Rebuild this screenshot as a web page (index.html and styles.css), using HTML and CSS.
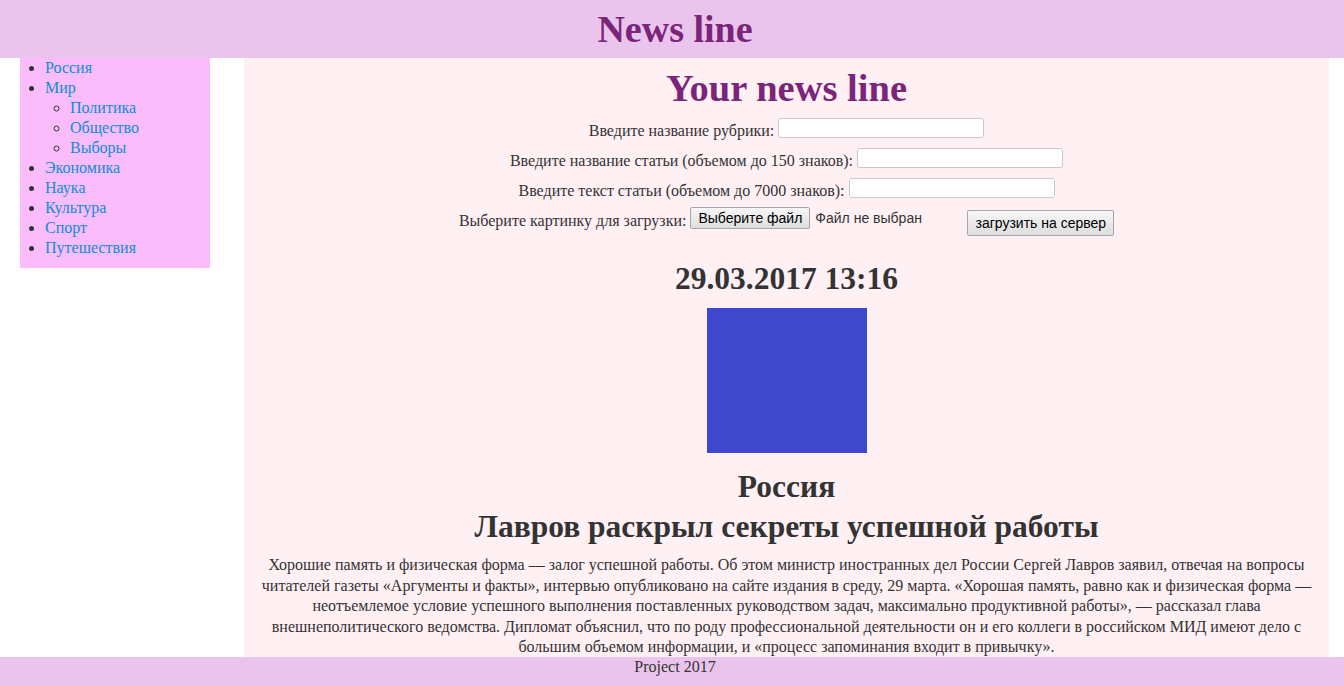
FILE: index.html
```html
<!DOCTYPE html>
<html lang="ru">
<head>
<meta charset="utf-8">
<title>News line</title>
<link rel="stylesheet" href="styles.css">
</head>
<body>
<header class="site-header">
  <h1 class="site-title">News line</h1>
</header>
<div class="layout">
  <nav class="sidebar">
    <ul class="menu">
      <li><a href="#">Россия</a></li>
      <li><a href="#">Мир</a>
        <ul class="submenu">
          <li><a href="#">Политика</a></li>
          <li><a href="#">Общество</a></li>
          <li><a href="#">Выборы</a></li>
        </ul>
      </li>
      <li><a href="#">Экономика</a></li>
      <li><a href="#">Наука</a></li>
      <li><a href="#">Культура</a></li>
      <li><a href="#">Спорт</a></li>
      <li><a href="#">Путешествия</a></li>
    </ul>
  </nav>
  <main class="content">
    <h2 class="page-title">Your news line</h2>
    <form class="news-form">
      <div class="form-row"><span class="label">Введите название рубрики:</span><input class="text-input" type="text"></div>
      <div class="form-row"><span class="label">Введите название статьи (объемом до 150 знаков):</span><input class="text-input" type="text"></div>
      <div class="form-row"><span class="label">Введите текст статьи (объемом до 7000 знаков):</span><input class="text-input" type="text"></div>
      <div class="form-row file-row">
        <span class="label">Выберите картинку для загрузки:</span>
        <span class="file-box"><span class="btn file-btn">Выберите файл</span><span class="file-name">Файл не выбран</span></span>
        <span class="btn submit-btn">загрузить на сервер</span>
      </div>
    </form>
    <article class="news">
      <h2 class="news-date">29.03.2017 13:16</h2>
      <div class="news-image"></div>
      <h2 class="news-rubric">Россия</h2>
      <h2 class="news-title">Лавров раскрыл секреты успешной работы</h2>
      <p class="news-text">Хорошие память и физическая форма — залог успешной работы. Об этом министр иностранных дел России Сергей Лавров заявил, отвечая на вопросы читателей газеты «Аргументы и факты», интервью опубликовано на сайте издания в среду, 29 марта. «Хорошая память, равно как и физическая форма — неотъемлемое условие успешного выполнения поставленных руководством задач, максимально продуктивной работы», — рассказал глава внешнеполитического ведомства. Дипломат объяснил, что по роду профессиональной деятельности он и его коллеги в российском МИД имеют дело с большим объемом информации, и «процесс запоминания входит в привычку».</p>
    </article>
  </main>
</div>
<footer class="site-footer">Project 2017</footer>
</body>
</html>
```
FILE: styles.css
```css
html, body {
  margin: 0;
  padding: 0;
}
body {
  font-family: "Liberation Serif", "Times New Roman", serif;
  font-size: 16px;
  line-height: 20px;
  color: #333;
  background: #fff;
}
.site-header {
  background: #eac4ec;
  height: 58px;
  padding-left: 6px;
}
.site-title {
  margin: 0;
  text-align: center;
  font-size: 38px;
  line-height: 58px;
  font-weight: bold;
  color: #7b257a;
}
.layout {
  display: flex;
  align-items: flex-start;
}
.sidebar {
  margin-left: 20px;
  width: 190px;
  background: #fbbcfb;
  padding-bottom: 10px;
}
.menu {
  margin: 0;
  padding-left: 25px;
  list-style: disc;
}
.submenu {
  margin: 0;
  padding-left: 25px;
  list-style: circle;
}
.menu a {
  color: #0a8ed6;
  text-decoration: none;
}
.content {
  margin-left: 34px;
  width: 1055px;
  padding: 0 15px 40px;
  background: #fff0f4;
  text-align: center;
}
.page-title {
  margin: 8px 0 0;
  font-size: 38.5px;
  line-height: 44px;
  color: #7b257a;
}
.news-form {
  margin-top: 3px;
}
.form-row {
  height: 30px;
  display: flex;
  justify-content: center;
  align-items: center;
  gap: 4px;
}
.label {
  margin-top: 6px;
}
.text-input {
  width: 202px;
  height: 16px;
  margin: 0;
  padding: 1px;
  border: 1px solid #c8c8c8;
  border-radius: 3px;
  background: #fff;
}
.file-box {
  width: 273px;
  display: flex;
  align-items: center;
  gap: 5px;
}
.btn {
  font-family: "Liberation Sans", Arial, sans-serif;
  font-size: 14px;
  line-height: 18px;
  color: #000;
  background: linear-gradient(#f6f6f6, #dedede);
  border: 1px solid #a6a6a6;
  border-radius: 2px;
  padding: 1px 7px;
  white-space: nowrap;
}
.file-btn {
  height: 18px;
}
.file-name {
  font-family: "Liberation Sans", Arial, sans-serif;
  font-size: 14px;
  color: #333;
}
.submit-btn {
  align-self: flex-start;
  margin-top: 7px;
  padding: 3px 7px;
}
.news-date {
  margin: 28px 0 0;
  font-size: 31.5px;
  line-height: 36px;
}
.news-image {
  width: 160px;
  height: 145px;
  margin: 11px auto 0;
  background: #3f47cc;
}
.news-rubric {
  margin: 16px 0 0;
  font-size: 31.5px;
  line-height: 36px;
}
.news-title {
  margin: 4px 0 0;
  font-size: 31.5px;
  line-height: 36px;
}
.news-text {
  margin: 10px 0 0;
  line-height: 20.5px;
}
.site-footer {
  position: fixed;
  left: 0;
  right: 0;
  bottom: 0;
  height: 28px;
  padding-left: 6px;
  background: #eac4ec;
  text-align: center;
  line-height: 20px;
}
```
